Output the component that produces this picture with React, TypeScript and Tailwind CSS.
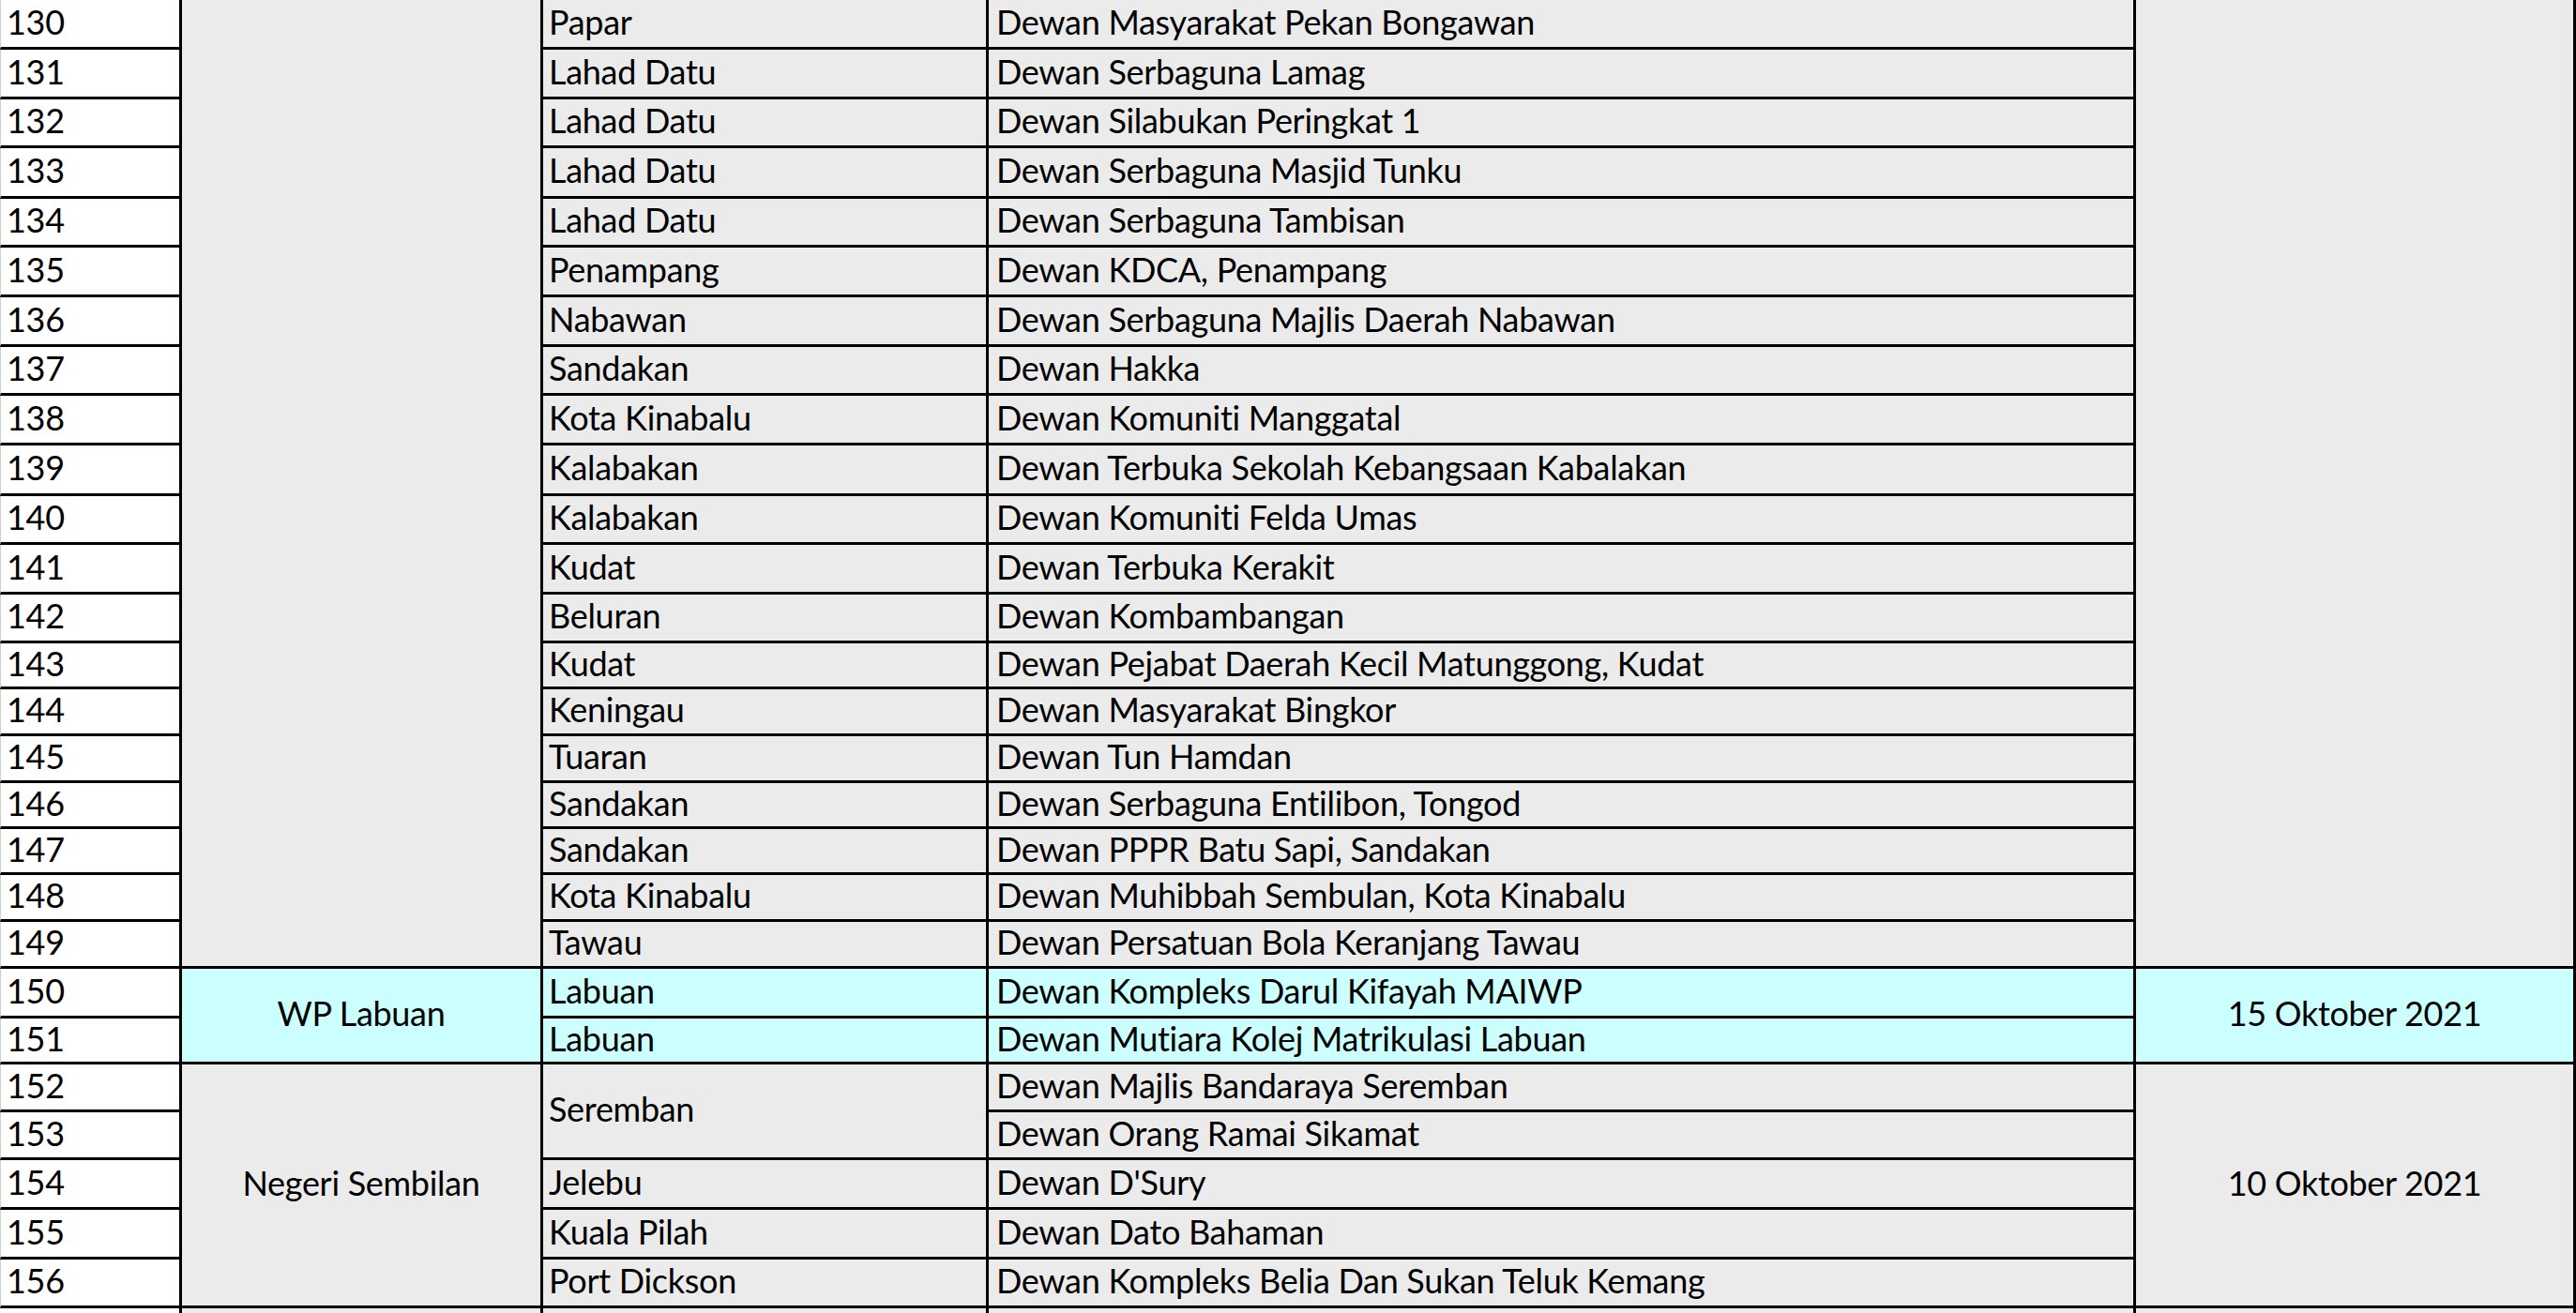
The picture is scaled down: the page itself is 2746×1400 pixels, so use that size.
import React from "react";

type Row = { n: number; h: string; d?: string; v: string };

const rows: Row[] = [
  { n: 130, h: "h-[53px]", d: "Papar", v: "Dewan Masyarakat Pekan Bongawan" },
  { n: 131, h: "h-[53px]", d: "Lahad Datu", v: "Dewan Serbaguna Lamag" },
  { n: 132, h: "h-[52px]", d: "Lahad Datu", v: "Dewan Silabukan Peringkat 1" },
  { n: 133, h: "h-[54px]", d: "Lahad Datu", v: "Dewan Serbaguna Masjid Tunku" },
  { n: 134, h: "h-[52px]", d: "Lahad Datu", v: "Dewan Serbaguna Tambisan" },
  { n: 135, h: "h-[53px]", d: "Penampang", v: "Dewan KDCA, Penampang" },
  { n: 136, h: "h-[53px]", d: "Nabawan", v: "Dewan Serbaguna Majlis Daerah Nabawan" },
  { n: 137, h: "h-[52px]", d: "Sandakan", v: "Dewan Hakka" },
  { n: 138, h: "h-[53px]", d: "Kota Kinabalu", v: "Dewan Komuniti Manggatal" },
  { n: 139, h: "h-[54px]", d: "Kalabakan", v: "Dewan Terbuka Sekolah Kebangsaan Kabalakan" },
  { n: 140, h: "h-[52px]", d: "Kalabakan", v: "Dewan Komuniti Felda Umas" },
  { n: 141, h: "h-[53px]", d: "Kudat", v: "Dewan Terbuka Kerakit" },
  { n: 142, h: "h-[52px]", d: "Beluran", v: "Dewan Kombambangan" },
  { n: 143, h: "h-[49px]", d: "Kudat", v: "Dewan Pejabat Daerah Kecil Matunggong, Kudat" },
  { n: 144, h: "h-[50px]", d: "Keningau", v: "Dewan Masyarakat Bingkor" },
  { n: 145, h: "h-[50px]", d: "Tuaran", v: "Dewan Tun Hamdan" },
  { n: 146, h: "h-[49px]", d: "Sandakan", v: "Dewan Serbaguna Entilibon, Tongod" },
  { n: 147, h: "h-[49px]", d: "Sandakan", v: "Dewan PPPR Batu Sapi, Sandakan" },
  { n: 148, h: "h-[50px]", d: "Kota Kinabalu", v: "Dewan Muhibbah Sembulan, Kota Kinabalu" },
  { n: 149, h: "h-[50px]", d: "Tawau", v: "Dewan Persatuan Bola Keranjang Tawau" },
];

const font = { fontFamily: "Lato, 'Open Sans', sans-serif" };

const cell = "border-r-[3px] border-b-[3px] border-black flex items-center pb-[5px]";

export default function App() {
  return (
    <div
      className="w-[2746px] h-[1400px] overflow-hidden bg-white text-black text-[36px] leading-none tracking-[-0.3px]"
      style={font}
    >
      <div className="grid grid-cols-[194px_385px_475px_1223px_469px]">
        {rows.map((r, i) => (
          <React.Fragment key={r.n}>
            <div className={`${cell} ${r.h} bg-white pl-[6px] border-l border-l-[#cfcfcf]`}>{r.n}</div>
            {i === 0 && <div className={`${cell} row-span-20 bg-[#ebebeb]`} />}
            <div className={`${cell} bg-[#ebebeb] pl-[6px]`}>{r.d}</div>
            <div className={`${cell} bg-[#ebebeb] pl-[8px]`}>{r.v}</div>
            {i === 0 && <div className={`${cell} row-span-20 bg-[#ebebeb]`} />}
          </React.Fragment>
        ))}

        {/* WP Labuan */}
        <div className={`${cell} h-[53px] bg-white pl-[6px] border-l border-l-[#cfcfcf]`}>150</div>
        <div className={`${cell} row-span-2 bg-[#ccffff] justify-center`}>WP Labuan</div>
        <div className={`${cell} bg-[#ccffff] pl-[6px]`}>Labuan</div>
        <div className={`${cell} bg-[#ccffff] pl-[8px]`}>Dewan Kompleks Darul Kifayah MAIWP</div>
        <div className={`${cell} row-span-2 bg-[#ccffff] justify-center`}>15 Oktober 2021</div>

        <div className={`${cell} h-[49px] bg-white pl-[6px] border-l border-l-[#cfcfcf]`}>151</div>
        <div className={`${cell} bg-[#ccffff] pl-[6px]`}>Labuan</div>
        <div className={`${cell} bg-[#ccffff] pl-[8px]`}>Dewan Mutiara Kolej Matrikulasi Labuan</div>

        {/* Negeri Sembilan */}
        <div className={`${cell} h-[51px] bg-white pl-[6px] border-l border-l-[#cfcfcf]`}>152</div>
        <div className={`${cell} row-span-5 bg-[#ebebeb] justify-center`}>Negeri Sembilan</div>
        <div className={`${cell} row-span-2 bg-[#ebebeb] pl-[6px]`}>Seremban</div>
        <div className={`${cell} bg-[#ebebeb] pl-[8px]`}>Dewan Majlis Bandaraya Seremban</div>
        <div className={`${cell} row-span-5 bg-[#ebebeb] justify-center`}>10 Oktober 2021</div>

        <div className={`${cell} h-[51px] bg-white pl-[6px] border-l border-l-[#cfcfcf]`}>153</div>
        <div className={`${cell} bg-[#ebebeb] pl-[8px]`}>Dewan Orang Ramai Sikamat</div>

        <div className={`${cell} h-[53px] bg-white pl-[6px] border-l border-l-[#cfcfcf]`}>154</div>
        <div className={`${cell} bg-[#ebebeb] pl-[6px]`}>Jelebu</div>
        <div className={`${cell} bg-[#ebebeb] pl-[8px]`}>Dewan D'Sury</div>

        <div className={`${cell} h-[53px] bg-white pl-[6px] border-l border-l-[#cfcfcf]`}>155</div>
        <div className={`${cell} bg-[#ebebeb] pl-[6px]`}>Kuala Pilah</div>
        <div className={`${cell} bg-[#ebebeb] pl-[8px]`}>Dewan Dato Bahaman</div>

        <div className={`${cell} h-[52px] bg-white pl-[6px] border-l border-l-[#cfcfcf]`}>156</div>
        <div className={`${cell} bg-[#ebebeb] pl-[6px]`}>Port Dickson</div>
        <div className={`${cell} bg-[#ebebeb] pl-[8px]`}>Dewan Kompleks Belia Dan Sukan Teluk Kemang</div>

        {/* filler */}
        <div className="h-[5px] bg-white border-r-[3px] border-black" />
        <div className="bg-[#ebebeb] border-r-[3px] border-black" />
        <div className="bg-[#ebebeb] border-r-[3px] border-black" />
        <div className="bg-[#ebebeb] border-r-[3px] border-black" />
        <div className="bg-[#ebebeb] border-r-[3px] border-black" />
      </div>
    </div>
  );
}
